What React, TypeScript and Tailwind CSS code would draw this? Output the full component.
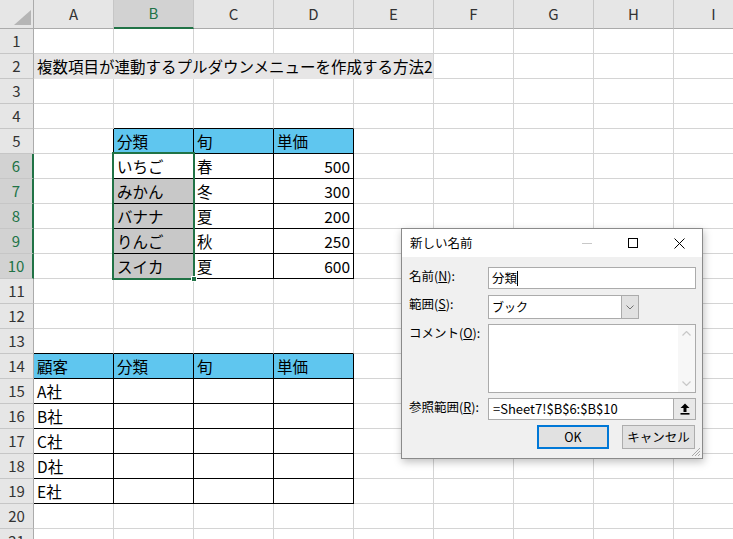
import React from 'react';

const JP = "font-['Noto_Sans_CJK_JP','Noto_Sans',sans-serif]";

const colLetters = ['A', 'B', 'C', 'D', 'E', 'F', 'G', 'H', 'I'];
const rowNumbers = Array.from({ length: 21 }, (_, i) => i + 1);

const cells: { [key: string]: string } = {
  A2: '複数項目が連動するプルダウンメニューを作成する方法2',
  B5: '分類', C5: '旬', D5: '単価',
  B6: 'いちご', C6: '春', D6: '500',
  B7: 'みかん', C7: '冬', D7: '300',
  B8: 'バナナ', C8: '夏', D8: '200',
  B9: 'りんご', C9: '秋', D9: '250',
  B10: 'スイカ', C10: '夏', D10: '600',
  A14: '顧客', B14: '分類', C14: '旬', D14: '単価',
  A15: 'A社', A16: 'B社', A17: 'C社', A18: 'D社', A19: 'E社',
};

// tables with thin black borders
const inTable = (r: number, c: number) =>
  (r >= 5 && r <= 10 && c >= 1 && c <= 3) || (r >= 14 && r <= 19 && c >= 0 && c <= 3);

const Cell: React.FC<{ r: number; c: number }> = ({ r, c }) => {
  const text = cells[`${colLetters[c]}${r}`];
  const isTitle = r === 2 && c <= 4;
  const isBlue = (r === 5 && c >= 1 && c <= 3) || (r === 14 && c <= 3);
  const isSel = c === 1 && r >= 7 && r <= 10;

  const bg = isTitle ? 'bg-[#e7e6e6]' : isBlue ? 'bg-[#5fc6ef]' : isSel ? 'bg-[#c8c8c8]' : 'bg-white';
  const right = inTable(r, c) || inTable(r, c + 1)
    ? 'border-r-black'
    : r === 2 && c <= 3
      ? 'border-r-[#e7e6e6]'
      : 'border-r-[#d4d4d4]';
  const bottom = inTable(r, c) || inTable(r + 1, c)
    ? 'border-b-black'
    : isTitle
      ? 'border-b-[#e7e6e6]'
      : 'border-b-[#d4d4d4]';
  const isNumber = c === 3 && r >= 6 && r <= 10;

  return (
    <div className={`border-r border-b ${right} ${bottom} ${bg} flex items-center px-[3px] text-[15.5px] leading-[24px] text-black ${isNumber ? 'justify-end' : ''}`}>
      {text && <span className="relative z-10 whitespace-nowrap">{text}</span>}
    </div>
  );
};

const Sheet: React.FC = () => (
  <div className={`grid grid-cols-[34px_repeat(9,80px)] grid-rows-[29px_repeat(21,25px)] ${JP}`}>
    {/* corner */}
    <div className="bg-[#e6e6e6] border-r border-b border-r-[#ababab] border-b-[#ababab] flex items-end justify-end pr-[2px] pb-[3px]">
      <svg width="17" height="15" viewBox="0 0 17 15">
        <polygon points="17,0 17,15 0,15" fill="#b5b5b5" />
      </svg>
    </div>
    {colLetters.map((l, i) => (
      <div
        key={l}
        className={`flex items-center justify-center text-[15px] border-r border-r-[#c6c6c6] ${
          i === 1
            ? 'bg-[#d2d2d2] border-b-2 border-b-[#217346] text-[#217346]'
            : 'bg-[#e6e6e6] border-b border-b-[#ababab] text-[#333]'
        }`}
      >
        {l}
      </div>
    ))}
    {rowNumbers.map(r => (
      <React.Fragment key={r}>
        <div
          className={`flex items-center justify-center text-[15px] border-b border-b-[#c6c6c6] ${
            r >= 6 && r <= 10
              ? 'bg-[#d2d2d2] border-r-2 border-r-[#217346] text-[#217346]'
              : 'bg-[#e6e6e6] border-r border-r-[#ababab] text-[#333]'
          }`}
        >
          {r}
        </div>
        {colLetters.map((_, c) => (
          <Cell key={c} r={r} c={c} />
        ))}
      </React.Fragment>
    ))}
  </div>
);

const Label: React.FC<{ text: string; u: string }> = ({ text, u }) => (
  <div className="w-[79px] shrink-0 text-[12.5px] leading-[17px] whitespace-nowrap">
    {text}(<span className="underline">{u}</span>):
  </div>
);

const Dialog: React.FC = () => (
  <div className={`absolute left-[401px] top-[228px] w-[302px] h-[231px] border border-[#8a8a8a] bg-[#f0f0f0] shadow-[1px_3px_8px_rgba(0,0,0,0.25)] flex flex-col text-black ${JP}`}>
    {/* title bar */}
    <div className="h-[28px] bg-white flex items-center shrink-0">
      <span className="flex-1 pl-[8px] text-[12.5px]">新しい名前</span>
      <div className="w-[46px] h-full flex items-center justify-center">
        <div className="w-[10px] h-px bg-[#c8c8c8]" />
      </div>
      <div className="w-[46px] h-full flex items-center justify-center">
        <div className="w-[10px] h-[10px] border border-black" />
      </div>
      <div className="w-[46px] h-full flex items-center justify-center">
        <svg width="11" height="11" viewBox="0 0 11 11">
          <path d="M0.5 0.5 L10.5 10.5 M10.5 0.5 L0.5 10.5" stroke="black" strokeWidth="1" />
        </svg>
      </div>
    </div>

    {/* body */}
    <div className="relative flex-1 pt-[10px] pl-[7px] pr-[6px] flex flex-col">
      <div className="flex items-start">
        <Label text="名前" u="N" />
        <div className="w-[208px] h-[22px] bg-white border border-[#ababab] flex items-center pl-[3px] text-[12.5px]">
          分類<span className="inline-block w-px h-[15px] bg-black" />
        </div>
      </div>

      <div className="flex items-start mt-[6px]">
        <Label text="範囲" u="S" />
        <div className="w-[151px] h-[24px] bg-white border border-[#ababab] flex items-center">
          <span className="flex-1 pl-[3px] text-[12px]">ブック</span>
          <div className="w-[17px] h-full bg-[#e1e1e1] border-l border-[#ababab] flex items-center justify-center">
            <svg width="8" height="5" viewBox="0 0 8 5">
              <polyline points="0.5,0.5 4,4 7.5,0.5" fill="none" stroke="#707070" strokeWidth="1" />
            </svg>
          </div>
        </div>
      </div>

      <div className="flex items-start mt-[5px]">
        <Label text="コメント" u="O" />
        <div className="w-[208px] h-[69px] bg-white border border-[#ababab] flex">
          <div className="flex-1" />
          <div className="w-[17px] h-full bg-[#f7f7f7] flex flex-col justify-between items-center py-[6px]">
            <svg width="9" height="5" viewBox="0 0 9 5">
              <polyline points="0.5,4.5 4.5,0.5 8.5,4.5" fill="none" stroke="#c8c8c8" strokeWidth="1.2" />
            </svg>
            <svg width="9" height="5" viewBox="0 0 9 5">
              <polyline points="0.5,0.5 4.5,4.5 8.5,0.5" fill="none" stroke="#c8c8c8" strokeWidth="1.2" />
            </svg>
          </div>
        </div>
      </div>

      <div className="flex items-start mt-[5px]">
        <Label text="参照範囲" u="R" />
        <div className="w-[208px] h-[22px] bg-white border border-[#ababab] flex items-center">
          <span className="flex-1 pl-[4px] text-[13px]">=Sheet7!$B$6:$B$10</span>
          <div className="w-[22px] h-full bg-[#e8e8e8] border-l border-[#ababab] flex items-center justify-center">
            <svg width="10" height="12" viewBox="0 0 10 12">
              <path d="M5 0.5 L9.5 5 H6.5 V9 H3.5 V5 H0.5 Z" fill="black" />
              <rect x="0.5" y="10" width="9" height="1.6" fill="black" />
            </svg>
          </div>
        </div>
      </div>

      <div className="flex justify-end gap-[13px] mt-[5px] pr-px">
        <button className="w-[72px] h-[24px] bg-[#e1e1e1] border-2 border-[#0078d7] text-[12.5px] flex items-center justify-center">
          OK
        </button>
        <button className="w-[73px] h-[24px] bg-[#e1e1e1] border border-[#adadad] text-[12.5px] flex items-center justify-center">
          キャンセル
        </button>
      </div>

      {/* resize grip */}
      <svg className="absolute right-[1px] bottom-[1px]" width="11" height="11" viewBox="0 0 11 11">
        <path d="M10 2 L2 10 M10 5 L5 10 M10 8 L8 10" stroke="#a8a8a8" strokeWidth="1" />
      </svg>
    </div>
  </div>
);

const App: React.FC = () => {
  return (
    <div className="relative w-[733px] h-[539px] overflow-hidden bg-white">
      <Sheet />

      {/* selection B6:B10 */}
      <div className="absolute left-[112px] top-[152px] w-[83px] h-[128px] border-2 border-[#217346] pointer-events-none" />
      <div className="absolute left-[191px] top-[276px] w-[6px] h-[6px] bg-[#217346] border border-white" />

      <Dialog />
    </div>
  );
};

export default App;
